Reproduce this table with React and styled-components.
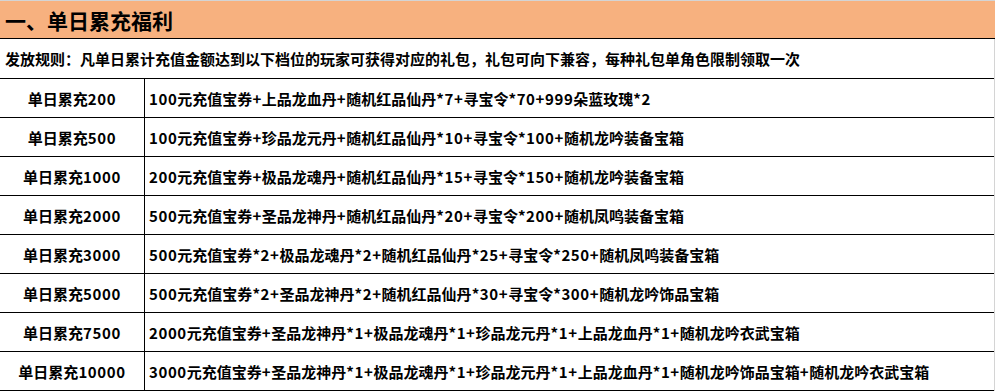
import React from "react";
import styled, { createGlobalStyle } from "styled-components";

const Global = createGlobalStyle`
  html, body { margin: 0; padding: 0; background: #ffffff; }
  body { font-family: "Noto Sans CJK SC", "Microsoft YaHei", sans-serif; color: #000; }
`;

const Sheet = styled.div`
  width: 995px;
  height: 391px;
  box-sizing: border-box;
  border-top: 1px solid #d4d4d4;
  overflow: hidden;
  background: #fff;
`;

const Title = styled.div`
  height: 37px;
  background: #f7b17f;
  border-bottom: 1px solid #000;
  display: flex;
  align-items: center;
  padding-left: 5px;
  font-size: 21px;
  font-weight: 700;
`;

const Table = styled.div`
  box-sizing: border-box;
  border-left: 1px solid #d4d4d4;
  border-right: 1px solid #d4d4d4;
  display: grid;
  grid-template-columns: 145px 1fr;
  margin-left: -1px;
  width: 996px;
`;

const Rule = styled.div`
  grid-column: 1 / 3;
  height: 39px;
  border-bottom: 1px solid #000;
  display: flex;
  align-items: center;
  padding-left: 5px;
  font-size: 15px;
  font-weight: 700;
`;

const Cell = styled.div`
  height: 38px;
  border-bottom: 1px solid #000;
  border-right: ${(p) => (p.$first ? "1px solid #000" : "none")};
  display: flex;
  align-items: center;
  justify-content: ${(p) => (p.$first ? "center" : "flex-start")};
  padding-left: ${(p) => (p.$first ? "0" : "4px")};
  font-size: 15px;
  font-weight: 700;
  white-space: nowrap;
`;

const Latin = styled.span`
  letter-spacing: 0.6px;
`;

function Mixed({ text }) {
  const parts = text.split(/([0-9+*]+)/).filter(Boolean);
  return parts.map((p, i) =>
    /^[0-9+*]+$/.test(p) ? <Latin key={i}>{p}</Latin> : <React.Fragment key={i}>{p}</React.Fragment>
  );
}

const rows = [
  ["单日累充200", "100元充值宝券+上品龙血丹+随机红品仙丹*7+寻宝令*70+999朵蓝玫瑰*2"],
  ["单日累充500", "100元充值宝券+珍品龙元丹+随机红品仙丹*10+寻宝令*100+随机龙吟装备宝箱"],
  ["单日累充1000", "200元充值宝券+极品龙魂丹+随机红品仙丹*15+寻宝令*150+随机龙吟装备宝箱"],
  ["单日累充2000", "500元充值宝券+圣品龙神丹+随机红品仙丹*20+寻宝令*200+随机凤鸣装备宝箱"],
  ["单日累充3000", "500元充值宝券*2+极品龙魂丹*2+随机红品仙丹*25+寻宝令*250+随机凤鸣装备宝箱"],
  ["单日累充5000", "500元充值宝券*2+圣品龙神丹*2+随机红品仙丹*30+寻宝令*300+随机龙吟饰品宝箱"],
  ["单日累充7500", "2000元充值宝券+圣品龙神丹*1+极品龙魂丹*1+珍品龙元丹*1+上品龙血丹*1+随机龙吟衣武宝箱"],
  ["单日累充10000", "3000元充值宝券+圣品龙神丹*1+极品龙魂丹*1+珍品龙元丹*1+上品龙血丹*1+随机龙吟饰品宝箱+随机龙吟衣武宝箱"],
];

export default function App() {
  return (
    <>
      <Global />
      <Sheet>
        <Title>一、单日累充福利</Title>
        <Table>
          <Rule>发放规则：凡单日累计充值金额达到以下档位的玩家可获得对应的礼包，礼包可向下兼容，每种礼包单角色限制领取一次</Rule>
          {rows.map(([a, b]) => (
            <React.Fragment key={a}>
              <Cell $first><Mixed text={a} /></Cell>
              <Cell><Mixed text={b} /></Cell>
            </React.Fragment>
          ))}
        </Table>
      </Sheet>
    </>
  );
}
